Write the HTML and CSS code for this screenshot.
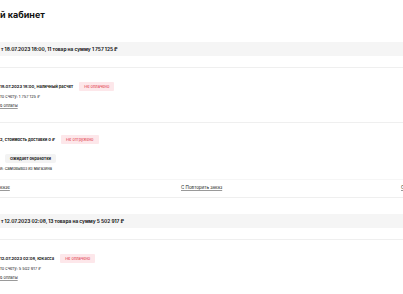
FILE: index.html
```html
<!DOCTYPE html>
<html lang="ru">
<head>
  <meta charset="UTF-8">
  <title>Личный кабинет</title>
  <link rel="stylesheet" href="styles.css">
</head>
<body>
  <h1 class="title">й кабинет</h1>

  <section class="order">
    <div class="order-head">т 18.07.2023 18:00, 11 товар на сумму 1 757 125 ₽</div>
    <div class="order-body">
      <div class="block">
        <div class="row">
          <span class="row-title">18.07.2023 18:00, Наличный расчет</span>
          <span class="badge">Не оплачено</span>
        </div>
        <div class="line">то счету: 1 757 125 ₽</div>
        <div class="line"><a class="link">б оплаты</a></div>
      </div>
      <div class="block">
        <div class="row">
          <span class="row-title">2, стоимость доставки 0 ₽</span>
          <span class="badge">Не отгружено</span>
        </div>
        <div class="status">Ожидает обработки</div>
        <div class="line line-tight">и: Самовывоз из магазина</div>
      </div>
      <div class="actions">
        <a class="link">казе</a>
        <a class="link">С Повторить заказ</a>
        <a class="link">С</a>
      </div>
    </div>
  </section>

  <section class="order">
    <div class="order-head">т 12.07.2023 02:08, 13 товара на сумму 5 502 917 ₽</div>
    <div class="order-body">
      <div class="block">
        <div class="row">
          <span class="row-title">12.07.2023 02:08, ЮKасса</span>
          <span class="badge">Не оплачено</span>
        </div>
        <div class="line">то счету: 5 502 917 ₽</div>
        <div class="line"><a class="link">б оплаты</a></div>
      </div>
    </div>
  </section>
</body>
</html>
```

FILE: styles.css
```css
html, body {
  overflow: hidden;
}

body {
  margin: 0;
  font-family: Inter, "Noto Sans", sans-serif;
  color: #1a1a1a;
  background: #ffffff;
}

.title {
  margin: 9px 0 21px;
  font-size: 9px;
  line-height: 12px;
  font-weight: 700;
  color: #111111;
}

.order {
  margin-bottom: 16px;
}

.order-head {
  height: 14px;
  line-height: 14px;
  padding-left: 1px;
  background: #f5f5f5;
  font-size: 4.8px;
  font-weight: 700;
  white-space: nowrap;
}

.order-body {
  margin-top: 11px;
  border-top: 1px solid #efefef;
}

.block {
  padding: 14px 0 13px;
  border-bottom: 1px solid #efefef;
}

.block + .block {
  padding: 12px 0 7px;
  border-bottom-color: #f6f6f6;
}

.row {
  display: flex;
  align-items: center;
  gap: 6px;
  height: 9px;
}

.row-title {
  font-size: 4.1px;
  font-weight: 700;
  white-space: nowrap;
}

.badge {
  height: 9px;
  line-height: 9px;
  padding: 0 5px;
  border-radius: 1px;
  background: #fde7ea;
  color: #e0303f;
  font-size: 4px;
  white-space: nowrap;
}

.line {
  margin-top: 3px;
  font-size: 4px;
  line-height: 6px;
  white-space: nowrap;
}

.line-tight {
  margin-top: 2px;
}

.link {
  color: #1a1a1a;
  text-decoration: underline;
  text-decoration-color: #9a9a9a;
  text-underline-offset: 1px;
}

.status {
  display: inline-block;
  margin: 4px 0 0 5px;
  padding: 0 5px;
  height: 9px;
  line-height: 9px;
  border-radius: 2px;
  background: #f3f3f3;
  font-size: 4px;
  font-weight: 700;
}

.actions {
  display: grid;
  grid-template-columns: 181px 220px 1fr;
  padding: 5px 0 6px;
  font-size: 4.5px;
  line-height: 6px;
  white-space: nowrap;
  border-bottom: 1px solid #efefef;
}
```
